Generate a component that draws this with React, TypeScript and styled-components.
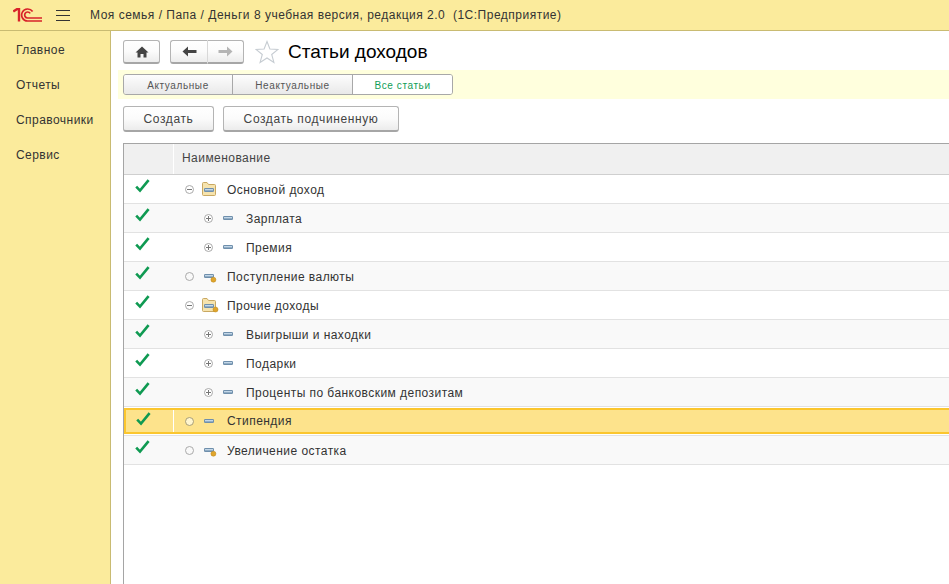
import React from 'react'
import styled, { createGlobalStyle } from 'styled-components'

const GlobalStyle = createGlobalStyle`
  html, body { margin: 0; padding: 0; background: #fff; overflow: hidden; }
  body { font-family: "Liberation Sans", Arial, sans-serif; }
`

const Page = styled.div`
  width: 949px;
  height: 584px;
  display: flex;
  flex-direction: column;
  overflow: hidden;
`

const Header = styled.header`
  height: 30px;
  flex: none;
  display: flex;
  align-items: center;
  background: #fbeb9c;
  border-bottom: 1px solid #c9bb72;
`

const LogoBox = styled.div`
  width: 30px;
  margin-left: 13px;
  display: flex;
`

const Burger = styled.div`
  width: 14px;
  height: 9px;
  margin-left: 13px;
  border-top: 1px solid #333;
  border-bottom: 1px solid #333;
  position: relative;
  &::after {
    content: '';
    position: absolute;
    left: 0;
    right: 0;
    top: 4px;
    height: 1px;
    background: #333;
  }
`

const HeaderTitle = styled.div`
  margin-left: 20px;
  font-size: 12px;
  letter-spacing: 0.5px;
  color: #333;
  white-space: nowrap;
`

const Body = styled.div`
  flex: 1;
  display: flex;
  min-height: 0;
`

const Sidebar = styled.nav`
  width: 110px;
  flex: none;
  background: #fbeb9c;
  border-right: 1px solid #c9bb72;
  padding-top: 2px;
  box-sizing: content-box;
`

const SideItem = styled.div`
  height: 35px;
  line-height: 35px;
  padding-left: 16px;
  font-size: 12px;
  letter-spacing: 0.45px;
  color: #333;
`

const Main = styled.main`
  flex: 1;
  min-width: 0;
  display: flex;
  flex-direction: column;
`

const TitleRow = styled.div`
  height: 39px;
  flex: none;
  padding: 9px 0 0 12px;
  box-sizing: border-box;
  display: flex;
  align-items: flex-start;
`

const ButtonBase = styled.button`
  box-sizing: border-box;
  display: flex;
  align-items: center;
  justify-content: center;
  padding: 0;
  margin: 0;
  border: 1px solid #b4b4b4;
  border-bottom: 2px solid #a6a6a6;
  border-radius: 3px;
  font-family: inherit;
  color: #444;
  background: linear-gradient(#ffffff 0%, #fbfbfb 50%, #ececec 100%);
`

const HomeButton = styled(ButtonBase)`
  width: 37px;
  height: 24px;
`

const NavGroup = styled.div`
  display: flex;
  margin-left: 10px;
`

const NavButton = styled(ButtonBase)<{ $side: 'left' | 'right' }>`
  width: 37px;
  height: 24px;
  border-radius: ${p => (p.$side === 'left' ? '3px 0 0 3px' : '0 3px 3px 0')};
  ${p => p.$side === 'right' && 'border-left: 1px solid #d8d8d8;'}
  ${p => p.$side === 'left' && 'border-right: none;'}
`

const StarBox = styled.div`
  width: 24px;
  height: 24px;
  margin-left: 11px;
`

const PageTitle = styled.h1`
  margin: 0 0 0 9px;
  font-size: 19px;
  font-weight: 400;
  line-height: 24px;
  color: #000;
  white-space: nowrap;
`

const FilterBand = styled.div`
  height: 29px;
  flex: none;
  margin-left: 7px;
  padding: 4px 0 0 5px;
  box-sizing: border-box;
  background: #ffffdd;
`

const Tabs = styled.div`
  display: flex;
  width: 330px;
  height: 21px;
  box-sizing: border-box;
  border: 1px solid #a8a8a8;
  border-radius: 3px;
  overflow: hidden;
`

const Tab = styled.div<{ $width: number; $active?: boolean }>`
  width: ${p => p.$width}px;
  box-sizing: border-box;
  text-align: center;
  font-size: 10px;
  line-height: 21px;
  letter-spacing: 0.6px;
  color: ${p => (p.$active ? '#0f9d58' : '#555')};
  background: ${p => (p.$active ? '#fff' : 'linear-gradient(#fdfdfd, #e9e9e9)')};
  border-right: ${p => (p.$active ? 'none' : '1px solid #a8a8a8')};
`

const ActionRow = styled.div`
  height: 44px;
  flex: none;
  padding: 7px 0 0 12px;
  box-sizing: border-box;
  display: flex;
  gap: 9px;
`

const ActionButton = styled(ButtonBase)<{ $width: number }>`
  width: ${p => p.$width}px;
  height: 26px;
  font-size: 12px;
  letter-spacing: 0.6px;
`

const Table = styled.div`
  flex: 1;
  margin-left: 12px;
  border-top: 1px solid #a5a5a5;
  border-left: 1px solid #a5a5a5;
  min-height: 0;
`

const HeadRow = styled.div`
  height: 30px;
  display: flex;
  background: #f0f0f0;
  border-bottom: 1px solid #cfcfcf;
`

const MarkHead = styled.div`
  width: 49px;
  flex: none;
  border-right: 1px solid #fff;
`

const NameHead = styled.div`
  padding-left: 8px;
  font-size: 12px;
  line-height: 29px;
  letter-spacing: 0.45px;
  color: #444;
`

const Row = styled.div<{ $tinted: boolean; $selected?: boolean }>`
  height: 29px;
  box-sizing: border-box;
  padding: ${p => (p.$selected ? '1px 0' : '0')};
  border-bottom: 1px solid #e2e2e2;
  background: ${p => (p.$tinted ? '#f9f9f9' : '#fff')};
`

const RowBody = styled.div<{ $selected?: boolean }>`
  height: ${p => (p.$selected ? '26px' : '100%')};
  box-sizing: border-box;
  display: flex;
  align-items: center;
  ${p =>
    p.$selected &&
    `
    background: #fde38c;
    border: 2px solid #fbc62e;
    border-right: none;
  `}
`

const MarkCell = styled.div<{ $selected?: boolean }>`
  width: ${p => (p.$selected ? 48 : 50)}px;
  flex: none;
  display: flex;
  padding-left: ${p => (p.$selected ? 10 : 11)}px;
  box-sizing: border-box;
  align-self: stretch;
  align-items: flex-start;
  padding-top: ${p => (p.$selected ? 2 : 4)}px;
  ${p => p.$selected && 'border-right: 1px solid #fff;'}
`

const Tree = styled.div<{ $level: number }>`
  display: flex;
  align-items: center;
  padding-left: ${p => 11 + p.$level * 19}px;
`

const Expander = styled.div`
  width: 9px;
  height: 9px;
  display: flex;
`

const KindIcon = styled.div`
  width: 18px;
  height: 15px;
  margin-left: 8px;
  display: flex;
`

const RowText = styled.div<{ $selected?: boolean }>`
  margin-left: 7px;
  padding-top: ${p => (p.$selected ? 0 : 2)}px;
  font-size: 12px;
  letter-spacing: 0.45px;
  color: #333;
  white-space: nowrap;
`

const Logo = () => (
  <svg width="30" height="14" viewBox="0 0 30 14" fill="none">
    <path d="M0.3 3.6 L4.2 1 H6 V13.5" stroke="#d8232a" strokeWidth="2.4" />
    <path d="M29 13 H14.5 A6 6 0 1 1 19.6 3.6" stroke="#d8232a" strokeWidth="1.7" />
    <path d="M29 10 H14.6 A3 3 0 1 1 17.2 5.4" stroke="#d8232a" strokeWidth="1.7" />
  </svg>
)

const HomeIcon = () => (
  <svg width="14" height="12" viewBox="0 0 14 12">
    <path d="M7 0.5 L13.5 6.5 H11.5 V11.5 H8.5 V8 H5.5 V11.5 H2.5 V6.5 H0.5 Z" fill="#444" />
  </svg>
)

const ArrowIcon = ({ dir, color }: { dir: 'left' | 'right'; color: string }) => (
  <svg width="15" height="11" viewBox="0 0 15 11">
    <path
      d={dir === 'left' ? 'M0.5 5.5 L6 0.5 V4 H14.5 V7 H6 V10.5 Z' : 'M14.5 5.5 L9 0.5 V4 H0.5 V7 H9 V10.5 Z'}
      fill={color}
    />
  </svg>
)

const StarIcon = () => (
  <svg width="24" height="24" viewBox="0 0 24 24">
    <path
      d="M12 1.5 L14.9 9 L23 9.4 L16.7 14.5 L18.9 22.4 L12 18 L5.1 22.4 L7.3 14.5 L1 9.4 L9.1 9 Z"
      fill="#fff"
      stroke="#c6ccd2"
      strokeWidth="1.1"
    />
  </svg>
)

const CheckIcon = () => (
  <svg width="15" height="14" viewBox="0 0 15 14">
    <path d="M1.2 7.6 L5 11.6 L13.6 1.2" fill="none" stroke="#0f9a52" strokeWidth="2.6" />
  </svg>
)

const ExpanderIcon = ({ kind, selected }: { kind: 'plus' | 'minus' | 'none'; selected?: boolean }) => (
  <svg width="9" height="9" viewBox="0 0 9 9" style={{ overflow: 'visible' }}>
    <circle
      cx="4.5"
      cy="4.5"
      r="4"
      fill={selected ? '#fff6cf' : kind === 'none' ? 'transparent' : '#fff'}
      stroke={selected ? '#a89f78' : '#aaa'}
    />
    {kind !== 'none' && <path d="M2 4.5 H7" stroke="#777" />}
    {kind === 'plus' && <path d="M4.5 2 V7" stroke="#777" />}
  </svg>
)

const Bar = ({ x, y }: { x: number; y: number }) => (
  <>
    <rect x={x} y={y} width="10" height="4" rx="1.3" fill="#6f8fac" />
    <rect x={x + 1} y={y + 1} width="8" height="1.4" fill="#c3d7e8" />
  </>
)

const Dot = ({ cx, cy }: { cx: number; cy: number }) => (
  <circle cx={cx} cy={cy} r="2.5" fill="#e0a52c" stroke="#b98416" strokeWidth="0.5" />
)

const ItemIcon = ({ dot }: { dot?: boolean }) => (
  <svg width="18" height="15" viewBox="0 0 18 15">
    <Bar x={2} y={5} />
    {dot && <Dot cx={11.4} cy={10.7} />}
  </svg>
)

const FolderIcon = ({ dot }: { dot?: boolean }) => (
  <svg width="18" height="15" viewBox="0 0 18 15">
    <path
      d="M0.5 12.5 V1.5 Q0.5 0.5 1.5 0.5 H5 L6.5 2.5 H12.5 Q13.5 2.5 13.5 3.5 V12.5 Q13.5 13.5 12.5 13.5 H1.5 Q0.5 13.5 0.5 12.5 Z"
      fill="#f6e3ad"
      stroke="#c9a862"
    />
    <Bar x={2} y={6} />
    {dot && <Dot cx={13.5} cy={11.5} />}
  </svg>
)

type Article = {
  name: string
  level: 0 | 1
  expander: 'plus' | 'minus' | 'none'
  icon: 'item' | 'itemDot' | 'folder' | 'folderDot'
  selected?: boolean
}

const articles: Article[] = [
  { name: 'Основной доход', level: 0, expander: 'minus', icon: 'folder' },
  { name: 'Зарплата', level: 1, expander: 'plus', icon: 'item' },
  { name: 'Премия', level: 1, expander: 'plus', icon: 'item' },
  { name: 'Поступление валюты', level: 0, expander: 'none', icon: 'itemDot' },
  { name: 'Прочие доходы', level: 0, expander: 'minus', icon: 'folderDot' },
  { name: 'Выигрыши и находки', level: 1, expander: 'plus', icon: 'item' },
  { name: 'Подарки', level: 1, expander: 'plus', icon: 'item' },
  { name: 'Проценты по банковским депозитам', level: 1, expander: 'plus', icon: 'item' },
  { name: 'Стипендия', level: 0, expander: 'none', icon: 'item', selected: true },
  { name: 'Увеличение остатка', level: 0, expander: 'none', icon: 'itemDot' },
]

const menu = ['Главное', 'Отчеты', 'Справочники', 'Сервис']

export default function App() {
  return (
    <Page>
      <GlobalStyle />
      <Header>
        <LogoBox>
          <Logo />
        </LogoBox>
        <Burger />
        <HeaderTitle>Моя семья / Папа / Деньги 8 учебная версия, редакция 2.0 &nbsp;(1С:Предприятие)</HeaderTitle>
      </Header>
      <Body>
        <Sidebar>
          {menu.map(item => (
            <SideItem key={item}>{item}</SideItem>
          ))}
        </Sidebar>
        <Main>
          <TitleRow>
            <HomeButton>
              <HomeIcon />
            </HomeButton>
            <NavGroup>
              <NavButton $side="left">
                <ArrowIcon dir="left" color="#444" />
              </NavButton>
              <NavButton $side="right">
                <ArrowIcon dir="right" color="#b5b5b5" />
              </NavButton>
            </NavGroup>
            <StarBox>
              <StarIcon />
            </StarBox>
            <PageTitle>Статьи доходов</PageTitle>
          </TitleRow>
          <FilterBand>
            <Tabs>
              <Tab $width={109}>Актуальные</Tab>
              <Tab $width={120}>Неактуальные</Tab>
              <Tab $width={99} $active>
                Все статьи
              </Tab>
            </Tabs>
          </FilterBand>
          <ActionRow>
            <ActionButton $width={91}>Создать</ActionButton>
            <ActionButton $width={176}>Создать подчиненную</ActionButton>
          </ActionRow>
          <Table>
            <HeadRow>
              <MarkHead />
              <NameHead>Наименование</NameHead>
            </HeadRow>
            {articles.map((a, i) => (
              <Row key={a.name} $tinted={i % 2 === 1} $selected={a.selected}>
                <RowBody $selected={a.selected}>
                  <MarkCell $selected={a.selected}>
                    <CheckIcon />
                  </MarkCell>
                  <Tree $level={a.level}>
                    <Expander>
                      <ExpanderIcon kind={a.expander} selected={a.selected} />
                    </Expander>
                    <KindIcon>
                      {a.icon === 'item' && <ItemIcon />}
                      {a.icon === 'itemDot' && <ItemIcon dot />}
                      {a.icon === 'folder' && <FolderIcon />}
                      {a.icon === 'folderDot' && <FolderIcon dot />}
                    </KindIcon>
                    <RowText $selected={a.selected}>{a.name}</RowText>
                  </Tree>
                </RowBody>
              </Row>
            ))}
          </Table>
        </Main>
      </Body>
    </Page>
  )
}
